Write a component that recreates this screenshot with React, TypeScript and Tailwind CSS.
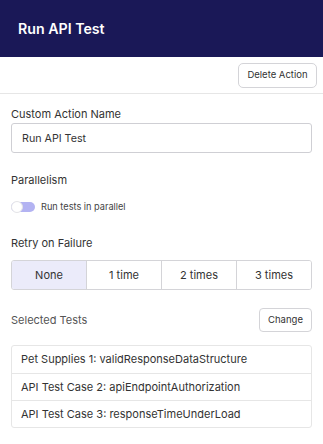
import { useState } from "react";

const retryOptions = ["None", "1 time", "2 times", "3 times"];

const selectedTests = [
  "Pet Supplies 1: validResponseDataStructure",
  "API Test Case 2: apiEndpointAuthorization",
  "API Test Case 3: responseTimeUnderLoad",
];

export default function App() {
  const [retry, setRetry] = useState("None");
  const [name, setName] = useState("Run API Test");

  return (
    <div className="w-[323px] h-[444px] bg-white font-['Inter',sans-serif] text-[#2d2d2d] overflow-hidden">
      <div className="h-[57px] bg-[#1a1857] flex items-center px-[18px]">
        <h1 className="text-[14.2px] font-semibold text-white">Run API Test</h1>
      </div>

      <div className="h-[37px] flex items-center justify-end pr-[6px] border-b border-[#e6e6e6]">
        <button className="h-[25px] w-[79px] rounded-[5px] border border-[#d4d4d8] bg-white text-[9.5px] text-[#333]">
          Delete Action
        </button>
      </div>

      <div className="px-[11px]">
        <label className="block mt-[12px] mb-[1px] text-[11px] leading-4 text-[#333]">Custom Action Name</label>
        <input
          value={name}
          onChange={(e) => setName(e.target.value)}
          className="w-full h-[30px] rounded-[3px] border border-[#cfcfd4] px-[10px] text-[10.7px] text-[#333] outline-none"
        />

        <div className="mt-[19px] text-[11px] leading-4 text-[#333]">Parallelism</div>
        <div className="mt-[12px] flex items-center gap-[6px]">
          <div className="relative w-[24px] h-[10px] rounded-full bg-[#b3b3f2]">
            <div className="absolute left-0 top-[-1px] w-[12px] h-[12px] rounded-full bg-white border border-[#e4e4e7]" />
          </div>
          <span className="text-[9.2px] text-[#444]">Run tests in parallel</span>
        </div>

        <div className="mt-[21px] text-[11px] leading-4 text-[#333]">Retry on Failure</div>
        <div className="mt-[9px] h-[30px] flex rounded-[3px] border border-[#d4d4d8] overflow-hidden">
          {retryOptions.map((opt, i) => (
            <button
              key={opt}
              onClick={() => setRetry(opt)}
              className={
                "flex-1 text-[11px] text-[#333] " +
                (i > 0 ? "border-l border-[#d4d4d8] " : "") +
                (retry === opt ? "bg-[#ebebfa]" : "bg-white")
              }
            >
              {opt}
            </button>
          ))}
        </div>

        <div className="mt-[18px] flex items-center justify-between">
          <span className="text-[11px] text-[#555]">Selected Tests</span>
          <button className="h-[24px] w-[53px] rounded-[4px] border border-[#d4d4d8] bg-white text-[9.5px] text-[#333]">
            Change
          </button>
        </div>

        <div className="mt-[13px] rounded-[3px] border border-[#e6e6e6]">
          {selectedTests.map((t, i) => (
            <div
              key={t}
              className={"h-[27px] flex items-center px-[9px] text-[11px] text-[#333] " + (i > 0 ? "border-t border-[#e6e6e6]" : "")}
            >
              {t}
            </div>
          ))}
        </div>
      </div>
    </div>
  );
}
